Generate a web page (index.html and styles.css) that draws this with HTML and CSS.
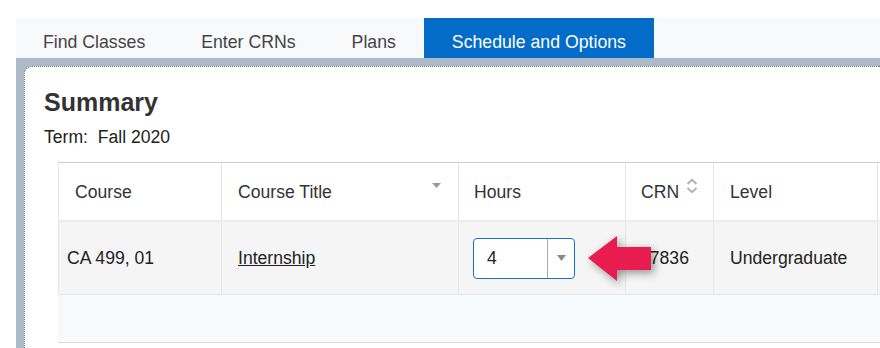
FILE: index.html
```html
<!DOCTYPE html>
<html lang="en">
<head>
<meta charset="utf-8">
<title>Summary</title>
<link rel="stylesheet" href="styles.css">
</head>
<body>
<div class="page">
  <nav class="tabs">
    <a class="tab">Find Classes</a>
    <a class="tab">Enter CRNs</a>
    <a class="tab">Plans</a>
    <a class="tab active">Schedule and Options</a>
  </nav>
  <div class="frame">
    <section class="panel">
      <h1 class="title">Summary</h1>
      <p class="term">Term:&nbsp; Fall 2020</p>
      <div class="table-wrap">
        <table class="grid">
          <colgroup>
            <col class="c1"><col class="c2"><col class="c3"><col class="c4"><col class="c5"><col class="c6">
          </colgroup>
          <thead>
            <tr>
              <th><span class="th-inner">Course</span></th>
              <th><span class="th-inner th-split">Course Title<svg class="sort-down" width="9" height="5" viewBox="0 0 9 5"><path d="M0 0H9L4.5 5Z" fill="#999"/></svg></span></th>
              <th><span class="th-inner">Hours</span></th>
              <th><span class="th-inner">CRN<svg class="sort-both" width="12" height="16" viewBox="0 0 12 16"><path d="M1.5 6L6 1.8L10.5 6M1.5 10L6 14.2L10.5 10" fill="none" stroke="#b3b3b3" stroke-width="2"/></svg></span></th>
              <th><span class="th-inner">Level</span></th>
              <th></th>
            </tr>
          </thead>
          <tbody>
            <tr class="data">
              <td class="first">CA 499, 01</td>
              <td><a class="link">Internship</a></td>
              <td>
                <div class="select">
                  <span class="select-value">4</span>
                  <span class="select-btn"><svg width="9" height="6" viewBox="0 0 9 6"><path d="M0 0H9L4.5 6Z" fill="#8a8a8a"/></svg></span>
                </div>
              </td>
              <td>17836</td>
              <td>Undergraduate</td>
              <td></td>
            </tr>
            <tr class="empty">
              <td colspan="6"></td>
            </tr>
          </tbody>
        </table>
        <svg class="pointer" width="70" height="50" viewBox="0 0 70 50">
          <path d="M2 24L31 2V13H65V36H31V47Z" fill="#e81c4f"/>
        </svg>
      </div>
    </section>
  </div>
</div>
</body>
</html>
```

FILE: styles.css
```css
html, body {
  margin: 0;
  padding: 0;
  overflow: hidden;
  background: #ffffff;
}

body {
  font-family: "Liberation Sans", Arial, sans-serif;
  font-size: 17.6px;
  color: #222;
}

.page {
  padding-top: 18px;
  margin-left: 16px;
  width: 864px;
}

.tabs {
  display: flex;
  height: 40px;
  background: #f7f9fb;
}

.tab {
  display: block;
  padding: 14px 28px 6px;
  line-height: 20px;
  font-size: 17.7px;
  color: #444;
  white-space: nowrap;
}

.tab:first-child {
  padding-left: 27px;
}

.tab.active {
  background: #036bc8;
  color: #ffffff;
}

.frame {
  background: #adbac7;
  padding: 8px 0 0 8px;
}

.panel {
  background: #ffffff;
  border-top: 1px dotted #6d6d6d;
  border-left: 1px dotted #6d6d6d;
  border-top-left-radius: 8px;
  padding: 20px 0 5px 19px;
}

.title {
  margin: 0;
  font-size: 25px;
  line-height: 30px;
  font-weight: bold;
  color: #333;
}

.term {
  margin: 10px 0 0;
  line-height: 20px;
  color: #222;
}

.table-wrap {
  position: relative;
  overflow: hidden;
  margin: 15px 0 0 14px;
}

.grid {
  border-collapse: collapse;
  table-layout: fixed;
  width: 1020px;
}

.c1 { width: 163px; }
.c2 { width: 237px; }
.c3 { width: 167px; }
.c4 { width: 88px; }
.c5 { width: 164px; }
.c6 { width: 201px; }

.grid th {
  height: 57px;
  padding: 0 0 0 16px;
  text-align: left;
  font-weight: normal;
  color: #333;
  border-top: 1px solid #cfcfcf;
  border-left: 1px solid #e6e6e6;
  border-bottom: 2px solid #ececec;
  vertical-align: middle;
}

.grid th:nth-child(3),
.grid th:nth-child(4) {
  padding-left: 15px;
}

.th-inner {
  display: flex;
  align-items: center;
  line-height: 20px;
}

.th-split {
  justify-content: space-between;
  padding-right: 17px;
}

.sort-down {
  margin-bottom: 13px;
}

.sort-both {
  margin-left: 7px;
  margin-bottom: 12px;
}

.grid td {
  padding: 0 0 0 16px;
  vertical-align: middle;
  border-left: 1px solid #e6e6e6;
  line-height: 20px;
}

.data td {
  height: 72px;
  background: #f5f5f5;
  border-bottom: 1px solid #e6e6e6;
  color: #222;
}

.data td.first {
  padding-left: 8px;
}

.data td:nth-child(3),
.data td:nth-child(4) {
  padding-left: 14px;
}

.link {
  color: #222;
  text-decoration: underline;
}

.empty td {
  height: 47px;
  padding: 0;
  background: #f8f9fa;
  border-bottom: 1px solid #d9d9d9;
  border-left: 1px solid #f8f9fa;
}

.select {
  display: flex;
  width: 100px;
  height: 39px;
  border: 1px solid #1a6fcf;
  border-radius: 4px;
  background: #ffffff;
}

.select-value {
  width: 60px;
  padding-left: 13px;
  line-height: 39px;
  color: #222;
}

.select-btn {
  flex: 1;
  display: flex;
  align-items: center;
  justify-content: center;
  border-left: 1px solid #a9a9a9;
}

.pointer {
  position: absolute;
  left: 528px;
  top: 72px;
  filter: drop-shadow(3px 3px 4px rgba(0, 0, 0, 0.4));
}
```
